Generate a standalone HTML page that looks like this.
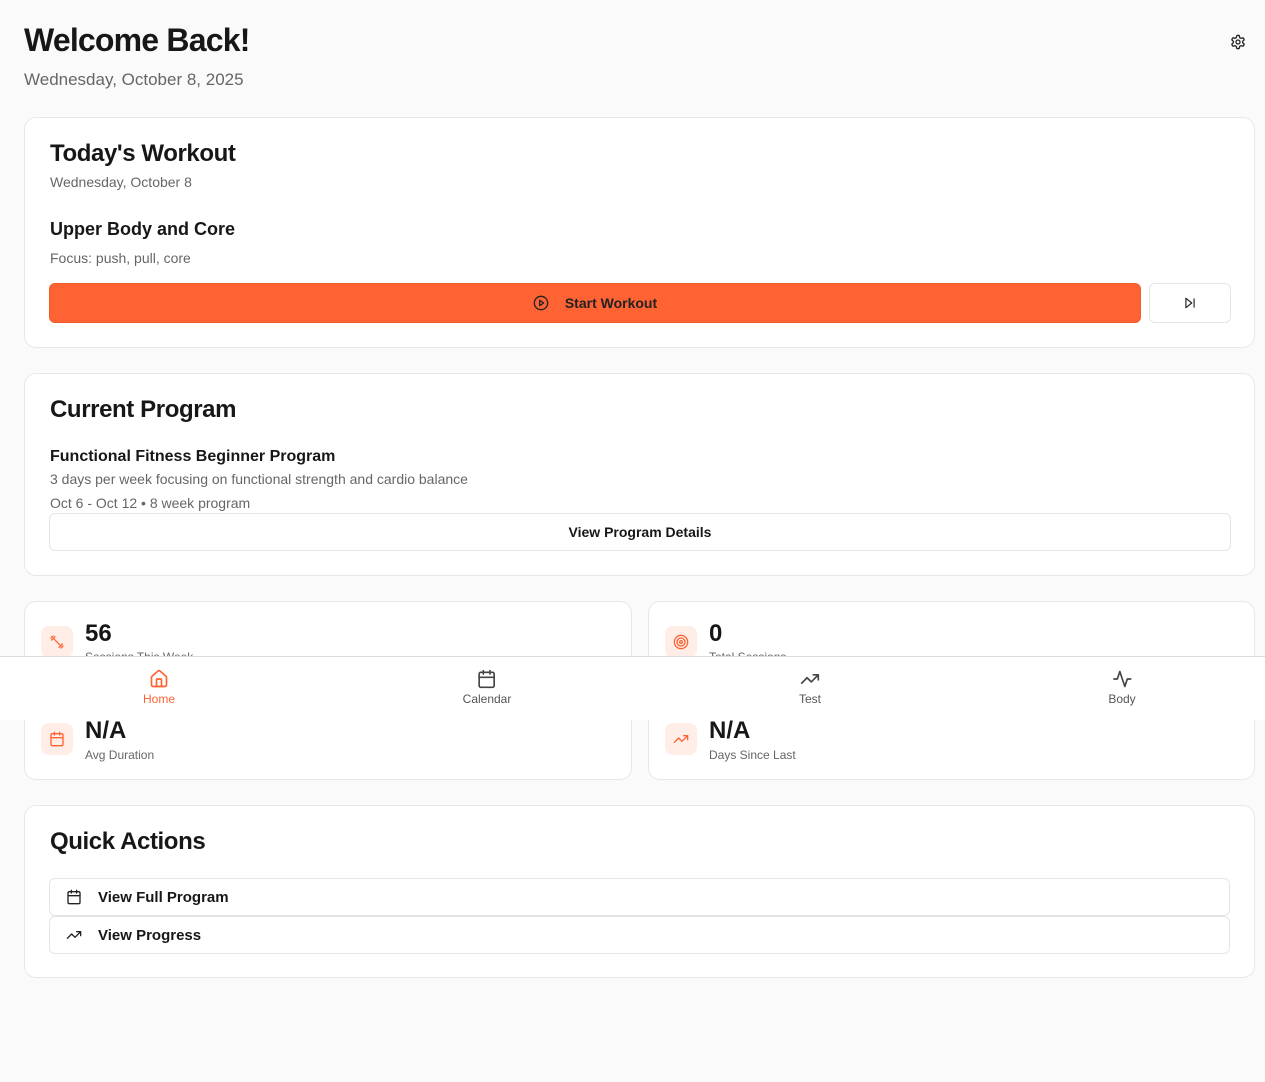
<!DOCTYPE html><html><head><style>
*{box-sizing:border-box;margin:0;padding:0}
body{width:1265px;height:1082px;background:#fafafa;font-family:"Liberation Sans",sans-serif;color:#171717;position:relative;overflow:hidden}
.card{position:absolute;left:24px;width:1231px;background:#fff;border:1px solid #e8e8e8;border-radius:12px}
.abs{position:absolute}
.muted{color:#666}
svg{fill:none;stroke-linecap:round;stroke-linejoin:round}
.ib{position:absolute;left:16px;width:32px;height:32px;border-radius:8px;background:#ffeee8;display:flex;align-items:center;justify-content:center}
.qa{position:absolute;left:24px;width:1181px;height:38px;border:1px solid #e5e5e5;border-radius:6px;font-size:15px;font-weight:bold;display:flex;align-items:center;padding-left:16px}
.qa span{margin-left:16px}
.nav{position:absolute;top:656px;left:0;width:1265px;height:64px;background:#fff;border-top:1px solid #ddd}
.ni{position:absolute;top:12px;text-align:center;font-size:12px;color:#555;transform:translateX(-50%)}
.ni svg{display:block;margin:0 auto 3px}
h2{font-size:24px;letter-spacing:-0.4px}
</style></head><body>
<div class="abs" style="left:24px;top:22px;font-size:32px;font-weight:bold;letter-spacing:-0.8px">Welcome Back!</div>
<div class="abs muted" style="left:24px;top:70px;font-size:17px">Wednesday, October 8, 2025</div>
<svg class="abs" style="left:1230px;top:34px" width="16" height="16" viewBox="0 0 24 24" stroke="#222" stroke-width="2"><path d="M12.22 2h-.44a2 2 0 0 0-2 2v.18a2 2 0 0 1-1 1.73l-.43.25a2 2 0 0 1-2 0l-.15-.08a2 2 0 0 0-2.73.73l-.22.38a2 2 0 0 0 .73 2.730l.15.1a2 2 0 0 1 1 1.72v.51a2 2 0 0 1-1 1.74l-.15.09a2 2 0 0 0-.73 2.73l.22.38a2 2 0 0 0 2.73.73l.15-.08a2 2 0 0 1 2 0l.43.25a2 2 0 0 1 1 1.73V20a2 2 0 0 0 2 2h.44a2 2 0 0 0 2-2v-.18a2 2 0 0 1 1-1.73l.43-.25a2 2 0 0 1 2 0l.15.08a2 2 0 0 0 2.73-.73l.22-.39a2 2 0 0 0-.73-2.73l-.15-.08a2 2 0 0 1-1-1.74v-.5a2 2 0 0 1 1-1.74l.15-.09a2 2 0 0 0 .73-2.73l-.22-.38a2 2 0 0 0-2.73-.73l-.15.08a2 2 0 0 1-2 0l-.43-.25a2 2 0 0 1-1-1.73V4a2 2 0 0 0-2-2z"/><circle cx="12" cy="12" r="3"/></svg>

<div class="card" style="top:117px;height:231px">
<h2 class="abs" style="left:25px;top:22px">Today's Workout</h2>
<div class="abs muted" style="left:25px;top:56px;font-size:14px">Wednesday, October 8</div>
<div class="abs" style="left:25px;top:101px;font-size:18px;font-weight:bold">Upper Body and Core</div>
<div class="abs muted" style="left:25px;top:132px;font-size:14px">Focus: push, pull, core</div>
<div class="abs" style="left:24px;top:165px;width:1092px;height:40px;background:#ff6333;border-radius:6px;border:1px solid #f05a2a;display:flex;align-items:center;justify-content:center;font-size:14px;font-weight:bold;color:#222">
<svg width="16" height="16" viewBox="0 0 24 24" stroke="#222" stroke-width="2" style="margin-right:16px"><circle cx="12" cy="12" r="10"/><path d="M10 8l6 4-6 4z"/></svg>Start Workout</div>
<div class="abs" style="left:1124px;top:165px;width:82px;height:40px;border:1px solid #e5e5e5;border-radius:6px;display:flex;align-items:center;justify-content:center">
<svg width="14" height="14" viewBox="0 0 24 24" stroke="#222" stroke-width="2"><path d="M5 4l10 8-10 8z M19 5v14"/></svg></div>
</div>

<div class="card" style="top:373px;height:203px">
<h2 class="abs" style="left:25px;top:22px">Current Program</h2>
<div class="abs" style="left:25px;top:74px;font-size:16px;font-weight:bold">Functional Fitness Beginner Program</div>
<div class="abs muted" style="left:25px;top:97px;font-size:14px">3 days per week focusing on functional strength and cardio balance</div>
<div class="abs muted" style="left:25px;top:121px;font-size:14px">Oct 6 - Oct 12 • 8 week program</div>
<div class="abs" style="left:24px;top:139px;width:1182px;height:38px;border:1px solid #e5e5e5;border-radius:6px;display:flex;align-items:center;justify-content:center;font-size:14px;font-weight:bold">View Program Details</div>
</div>

<div class="card" style="top:601px;width:608px;height:90px;border-bottom:none">
<div class="ib" style="top:24px"><svg width="16" height="16" viewBox="0 0 24 24" stroke="#ff6333" stroke-width="2"><path d="M6.5 6.5l11 11M4 9l5-5M15 20l5-5M3 6l3-3M18 21l3-3"/></svg></div>
<div class="abs" style="left:60px;top:18px;font-size:24px;font-weight:bold">56</div>
<div class="abs muted" style="left:60px;top:48px;font-size:12px">Sessions This Week</div></div>
<div class="card" style="top:601px;left:648px;width:607px;height:90px">
<div class="ib" style="top:24px"><svg width="16" height="16" viewBox="0 0 24 24" stroke="#ff6333" stroke-width="2"><circle cx="12" cy="12" r="10"/><circle cx="12" cy="12" r="6"/><circle cx="12" cy="12" r="2"/></svg></div>
<div class="abs" style="left:60px;top:18px;font-size:24px;font-weight:bold">0</div>
<div class="abs muted" style="left:60px;top:48px;font-size:12px">Total Sessions</div></div>
<div class="card" style="top:690px;width:608px;height:90px;border-top:none;border-radius:0 0 12px 12px">
<div class="ib" style="top:33px"><svg width="16" height="16" viewBox="0 0 24 24" stroke="#ff6333" stroke-width="2"><rect x="3" y="4" width="18" height="18" rx="2"/><path d="M16 2v4M8 2v4M3 10h18"/></svg></div>
<div class="abs" style="left:60px;top:27px;font-size:24px;font-weight:bold">N/A</div>
<div class="abs muted" style="left:60px;top:58px;font-size:12px">Avg Duration</div></div>
<div class="card" style="top:690px;left:648px;width:607px;height:90px;border-top:none;border-radius:0 0 12px 12px">
<div class="ib" style="top:33px"><svg width="16" height="16" viewBox="0 0 24 24" stroke="#ff6333" stroke-width="2"><path d="M22 7l-8.5 8.5-5-5L2 17M16 7h6v6"/></svg></div>
<div class="abs" style="left:60px;top:27px;font-size:24px;font-weight:bold">N/A</div>
<div class="abs muted" style="left:60px;top:58px;font-size:12px">Days Since Last</div></div>

<div class="card" style="top:805px;height:173px">
<h2 class="abs" style="left:25px;top:22px">Quick Actions</h2>
<div class="qa" style="top:72px"><svg width="16" height="16" viewBox="0 0 24 24" stroke="#222" stroke-width="2"><rect x="3" y="4" width="18" height="18" rx="2"/><path d="M16 2v4M8 2v4M3 10h18"/></svg><span>View Full Program</span></div>
<div class="qa" style="top:110px"><svg width="16" height="16" viewBox="0 0 24 24" stroke="#222" stroke-width="2"><path d="M22 7l-8.5 8.5-5-5L2 17M16 7h6v6"/></svg><span>View Progress</span></div>
</div>

<div class="nav">
<div class="ni" style="left:159px;color:#ff6333"><svg width="20" height="20" viewBox="0 0 24 24" stroke="#ff6333" stroke-width="2"><path d="M15 21v-8a1 1 0 0 0-1-1h-4a1 1 0 0 0-1 1v8"/><path d="M3 10a2 2 0 0 1 .7-1.5l7-6a2 2 0 0 1 2.6 0l7 6A2 2 0 0 1 21 10v9a2 2 0 0 1-2 2H5a2 2 0 0 1-2-2z"/></svg>Home</div>
<div class="ni" style="left:487px"><svg width="20" height="20" viewBox="0 0 24 24" stroke="#444" stroke-width="2"><rect x="3" y="4" width="18" height="18" rx="2"/><path d="M16 2v4M8 2v4M3 10h18"/></svg>Calendar</div>
<div class="ni" style="left:810px"><svg width="20" height="20" viewBox="0 0 24 24" stroke="#444" stroke-width="2"><path d="M22 7l-8.5 8.5-5-5L2 17M16 7h6v6"/></svg>Test</div>
<div class="ni" style="left:1122px"><svg width="20" height="20" viewBox="0 0 24 24" stroke="#444" stroke-width="2"><path d="M22 12h-4l-3 9L9 3l-3 9H2"/></svg>Body</div>
</div>
</body></html>
